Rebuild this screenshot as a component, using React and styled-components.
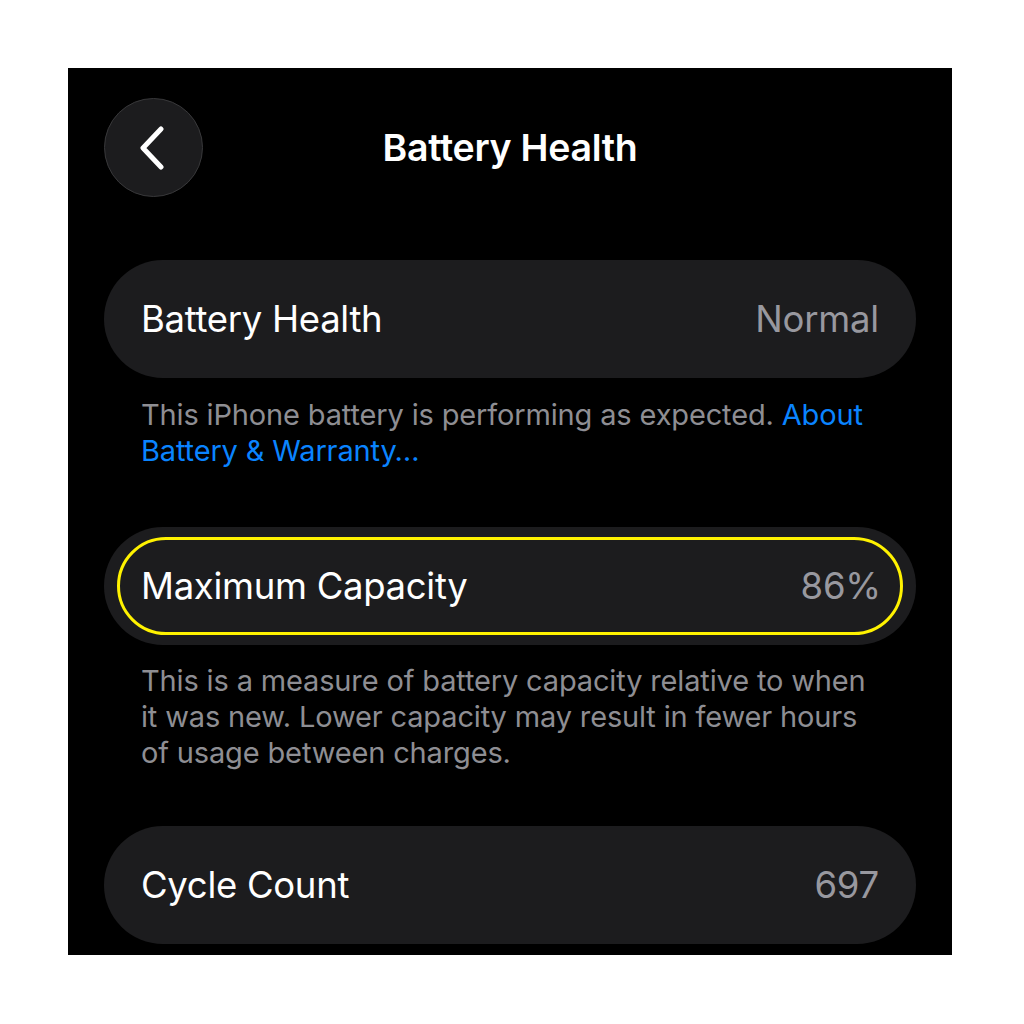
import React from 'react';
import styled, { createGlobalStyle } from 'styled-components';

const GlobalStyle = createGlobalStyle`
    html, body {
        margin: 0;
        padding: 0;
        background: #ffffff;
    }
    body {
        font-family: Inter, "Noto Sans", "Liberation Sans", sans-serif;
        -webkit-font-smoothing: antialiased;
    }
`;

const Page = styled.div`
    width: 1024px;
    height: 1024px;
    padding: 68px 0 0 68px;
    box-sizing: border-box;
`;

const Screen = styled.div`
    width: 884px;
    height: 887px;
    background: #000;
    padding: 30px 36px 0;
    box-sizing: border-box;
    overflow: hidden;
    display: flex;
    flex-direction: column;
`;

const NavBar = styled.div`
    height: 99px;
    display: grid;
    grid-template-columns: 99px 1fr 99px;
    align-items: center;
    margin-bottom: 63px;
`;

const BackButton = styled.button`
    width: 99px;
    height: 99px;
    border-radius: 50%;
    background: #1c1c1e;
    border: 1.5px solid #38383a;
    box-sizing: border-box;
    display: flex;
    align-items: center;
    justify-content: center;
    padding: 0 4px 0 0;
    cursor: pointer;
`;

const Title = styled.h1`
    margin: 0;
    text-align: center;
    color: #fff;
    font-size: 37.5px;
    font-weight: 600;
    letter-spacing: -0.3px;
`;

const Row = styled.div`
    height: 118px;
    border-radius: 59px;
    background: #1c1c1e;
    padding: ${p => p.highlighted ? '10px 13px' : '0 37px'};
    box-sizing: border-box;
    display: flex;
    align-items: stretch;
`;

const RowInner = styled.div`
    flex: 1;
    display: flex;
    align-items: center;
    justify-content: space-between;
    ${p => p.highlighted && `
        border: 3px solid #fff200;
        border-radius: 50px;
        padding: 0 19px 0 21px;
    `}
`;

const Label = styled.span`
    color: #fff;
    font-size: 36.5px;
    font-weight: 400;
    letter-spacing: -0.3px;
`;

const Value = styled.span`
    color: #98989f;
    font-size: 36.5px;
    font-weight: 400;
    letter-spacing: -0.2px;
`;

const Footer = styled.p`
    margin: ${p => p.top}px 0 ${p => p.bottom}px;
    padding: 0 37px;
    color: #8e8e93;
    font-size: 29px;
    line-height: 36px;
    letter-spacing: -0.15px;
    white-space: nowrap;
`;

const Link = styled.a`
    color: #0a84ff;
    text-decoration: none;
`;

const Chevron = () => (
    <svg width="28" height="44" viewBox="0 0 28 44" fill="none">
        <path d="M23 3 L5 22 L23 41" stroke="#fff" strokeWidth="5" strokeLinecap="round" strokeLinejoin="round" />
    </svg>
);

const SettingRow = ({ label, value, highlighted }) => (
    <Row highlighted={highlighted}>
        <RowInner highlighted={highlighted}>
            <Label>{label}</Label>
            <Value>{value}</Value>
        </RowInner>
    </Row>
);

export default function App() {
    return (
        <Page>
            <GlobalStyle />
            <Screen>
                <NavBar>
                    <BackButton aria-label="Back">
                        <Chevron />
                    </BackButton>
                    <Title>Battery Health</Title>
                    <span />
                </NavBar>

                <SettingRow label="Battery Health" value="Normal" />
                <Footer top={19} bottom={58}>
                    This iPhone battery is performing as expected. <Link href="#">About<br />Battery &amp; Warranty…</Link>
                </Footer>

                <SettingRow label="Maximum Capacity" value="86%" highlighted />
                <Footer top={18} bottom={55}>
                    This is a measure of battery capacity relative to when<br />
                    it was new. Lower capacity may result in fewer hours<br />
                    of usage between charges.
                </Footer>

                <SettingRow label="Cycle Count" value="697" />
            </Screen>
        </Page>
    );
}
